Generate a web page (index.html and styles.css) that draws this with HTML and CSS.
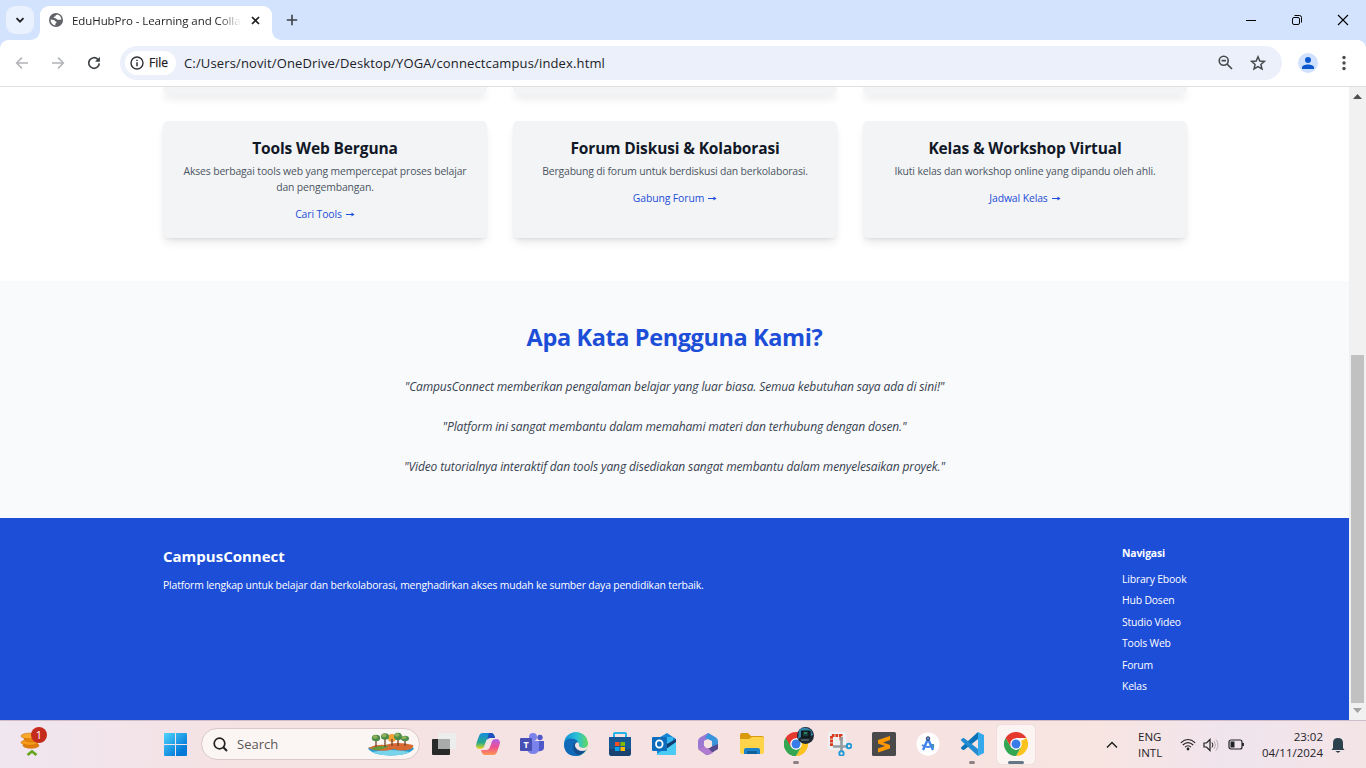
FILE: index.html
```html
<!DOCTYPE html>
<html lang="id">
<head>
<meta charset="utf-8">
<title>EduHubPro - Learning and Collaboration</title>
<link rel="stylesheet" href="styles.css">
</head>
<body>
<div class="screen">
  <header class="tabstrip">
    <div class="tabsearch"><svg width="10" height="10" viewBox="0 0 10 10"><path d="M1.5 3.2 5 6.7 8.500 3.200" fill="none" stroke="#1f2023" stroke-width="1.8"/></svg></div>
    <div class="tab">
      <svg class="globe" width="14" height="14" viewBox="0 0 14 14"><circle cx="7" cy="7" r="7" fill="#5f6368"/><path d="M8.500 1.600Q6 2.200 6.300 3.600 4.500 3.600 4.700 5 7.800 4.800 8 6.500 9.500 7 12.400 6.500 12 2.600 8.500 1.600ZM1.500 6.400Q5.800 6.600 6.200 8.200 7.800 8.300 7.500 9.700 6 9.900 6.200 12.400 1.800 11.500 1.500 6.400Z" fill="#fff"/></svg>
      <span class="tab-title">EduHubPro - Learning and Colla</span>
      <svg class="tab-x" width="9" height="9" viewBox="0 0 9 9"><path d="M1 1 8 8M8 1 1 8" stroke="#1f2023" stroke-width="1.7"/></svg>
    </div>
    <svg class="plus" width="12" height="12" viewBox="0 0 12 12"><path d="M6 .8V11.200M.8 6H11.200" stroke="#3c4043" stroke-width="1.6"/></svg>
    <div class="wincontrols">
      <svg width="12" height="12" viewBox="0 0 12 12"><path d="M1 6.500H11" stroke="#000"/></svg>
      <svg width="12" height="12" viewBox="0 0 12 12"><rect x="1.500" y="3.500" width="7" height="7" rx="1.500" fill="none" stroke="#000"/><path d="M3.500 1.500H8.500Q10.500 1.500 10.500 3.500V8.500" fill="none" stroke="#000"/></svg>
      <svg width="12" height="12" viewBox="0 0 12 12"><path d="M1 1 11 11M11 1 1 11" stroke="#000" stroke-width="1.1"/></svg>
    </div>
  </header>
  <div class="toolbar">
    <svg width="14" height="14" viewBox="0 0 14 14"><path d="M13 7H2M7 1.600 1.600 7 7 12.400" fill="none" stroke="#b2b4b8" stroke-width="1.500"/></svg>
    <svg width="14" height="14" viewBox="0 0 14 14"><path d="M1 7H12M7 1.600 12.400 7 7 12.400" fill="none" stroke="#b2b4b8" stroke-width="1.500"/></svg>
    <svg width="14" height="14" viewBox="0 0 14 14"><path d="M12.300 7.400A5.300 5.300 0 1 1 10.800 3.300L12 4.500" fill="none" stroke="#3c4043" stroke-width="1.700"/><path d="M12.900.8V5.700H8Z" fill="#3c4043"/></svg>
    <div class="omnibox">
      <div class="chip"><svg width="14" height="14" viewBox="0 0 14 14"><circle cx="7" cy="7" r="6" fill="none" stroke="#303236" stroke-width="1.400"/><path d="M7 6.200V10.200M7 3.700V5.100" stroke="#303236" stroke-width="1.500"/></svg><span>File</span></div>
      <span class="url">C:/Users/novit/OneDrive/Desktop/YOGA/connectcampus/index.html</span>
      <svg class="mag" width="15" height="15" viewBox="0 0 15 15"><circle cx="5.700" cy="5.700" r="4.500" fill="none" stroke="#474a4d" stroke-width="1.600"/><path d="M9 9 14 14M3.500 5.700H8" stroke="#474a4d" stroke-width="1.700"/></svg>
      <svg class="star" width="16" height="16" viewBox="0 0 16 16"><path d="M8 1.800 9.800 6 14.400 6.400 10.900 9.400 12 13.900 8 11.500 4 13.900 5.100 9.400 1.600 6.400 6.200 6Z" fill="none" stroke="#474a4d" stroke-width="1.500"/></svg>
    </div>
    <svg class="profile" width="20" height="20" viewBox="0 0 20 20"><circle cx="10" cy="10" r="10" fill="#d0e1fd"/><circle cx="10" cy="7" r="3" fill="#0b57d0"/><path d="M4 16V14.500C4 10.500 16 10.500 16 14.500V16Z" fill="#0b57d0"/></svg>
    <svg class="dots" width="4" height="16" viewBox="0 0 4 16"><g fill="#474a4d"><circle cx="2" cy="2.500" r="1.700"/><circle cx="2" cy="8" r="1.700"/><circle cx="2" cy="13.500" r="1.700"/></g></svg>
  </div>
  <div class="viewport">
    <main class="page">
      <section class="features">
        <div class="row tail"><div class="card"></div><div class="card"></div><div class="card"></div></div>
        <div class="row">
          <article class="card"><h3>Tools Web Berguna</h3><p>Akses berbagai tools web yang mempercepat proses belajar<br>dan pengembangan.</p><a>Cari Tools <svg class="arr" width="9" height="6" viewBox="0 0 9 6"><path d="M0 3.500H7" stroke="#1d4ed8"/><path d="M5.500 1.500 8.500 3.500 5.500 5.500Z" fill="#1d4ed8"/></svg></a></article>
          <article class="card"><h3>Forum Diskusi &amp; Kolaborasi</h3><p class="tight">Bergabung di forum untuk berdiskusi dan berkolaborasi.</p><a>Gabung Forum <svg class="arr" width="9" height="6" viewBox="0 0 9 6"><path d="M0 3.500H7" stroke="#1d4ed8"/><path d="M5.500 1.500 8.500 3.500 5.500 5.500Z" fill="#1d4ed8"/></svg></a></article>
          <article class="card"><h3>Kelas &amp; Workshop Virtual</h3><p>Ikuti kelas dan workshop online yang dipandu oleh ahli.</p><a>Jadwal Kelas <svg class="arr" width="9" height="6" viewBox="0 0 9 6"><path d="M0 3.500H7" stroke="#1d4ed8"/><path d="M5.500 1.500 8.500 3.500 5.500 5.500Z" fill="#1d4ed8"/></svg></a></article>
        </div>
      </section>
      <section class="quotes">
        <h2>Apa Kata Pengguna Kami?</h2>
        <p>"CampusConnect memberikan pengalaman belajar yang luar biasa. Semua kebutuhan saya ada di sini!"</p>
        <p>"Platform ini sangat membantu dalam memahami materi dan terhubung dengan dosen."</p>
        <p>"Video tutorialnya interaktif dan tools yang disediakan sangat membantu dalam menyelesaikan proyek."</p>
      </section>
      <footer class="foot">
        <div><h4>CampusConnect</h4><p>Platform lengkap untuk belajar dan berkolaborasi, menghadirkan akses mudah ke sumber daya pendidikan terbaik.</p></div>
        <nav><h5>Navigasi</h5><a>Library Ebook</a><a>Hub Dosen</a><a>Studio Video</a><a>Tools Web</a><a>Forum</a><a>Kelas</a></nav>
      </footer>
    </main>
    <div class="scroll">
      <svg width="9" height="5" viewBox="0 0 9 5"><path d="M0 5 4.500 0 9 5Z" fill="#505050"/></svg>
      <div class="thumb"></div>
      <svg width="9" height="5" viewBox="0 0 9 5"><path d="M0 0H9L4.500 5Z" fill="#a3a3a3"/></svg>
    </div>
  </div>
  <div class="taskbar">
    <div class="widget"><svg width="28" height="30" viewBox="0 0 28 30"><g stroke="#c76a05" stroke-width=".6"><ellipse cx="11" cy="18.500" rx="8" ry="2.800" fill="#e37d0a"/><ellipse cx="9.500" cy="15.500" rx="8.500" ry="2.800" fill="#f59a1b"/><ellipse cx="12" cy="12" rx="8" ry="2.800" fill="#e8860d"/><ellipse cx="9.500" cy="9" rx="8.500" ry="2.800" fill="#fba92d"/></g><path d="M7.500 28 12 24.500 16.500 28" fill="none" stroke="#63a51c" stroke-width="2.600"/></svg><span class="badge">1</span></div>
    <svg class="start" width="23" height="23" viewBox="0 0 23 23"><defs><linearGradient id="wg" x1="0" y1="0" x2="23" y2="23" gradientUnits="userSpaceOnUse"><stop offset="0" stop-color="#50d4fc"/><stop offset=".8" stop-color="#0078d8"/></linearGradient></defs><path d="M0 1Q0 0 1 0H11V11H0ZM12 0H22Q23 0 23 1V11H12ZM0 12H11V23H1Q0 23 0 22ZM12 12H23V22Q23 23 22 23H12Z" fill="url(#wg)"/></svg>
    <div class="search">
      <svg width="15" height="15" viewBox="0 0 15 15"><circle cx="6.500" cy="6.500" r="5.300" fill="none" stroke="#222" stroke-width="1.700"/><path d="M10.300 10.300 14 14" stroke="#222" stroke-width="2"/></svg>
      <span>Search</span>
      <svg class="island" width="48" height="24" viewBox="0 0 48 24"><path d="M1 16Q24 9 47 16 44 23 24 23.500 4 23 1 16Z" fill="#299bd0"/><path d="M5 20Q24 16 43 20 36 23.500 24 23.500 12 23.500 5 20Z" fill="#78d4eb"/><path d="M1 16Q9 12 18 13 30 9 46 13 47 15 44 17 34 20 27 17 19 20 7 18Z" fill="#d66a32"/><path d="M4 16Q14 13 22 14 17 18 7 18Z" fill="#659b3b"/><circle cx="25" cy="6" r="4" fill="#f3a134"/><path d="M9 15V6M18 15V5M31 14V5M38 14V7M25 14V7" stroke="#70412a" stroke-width="1.300"/><g fill="#4c8d48"><ellipse cx="9" cy="6" rx="4.200" ry="3.200"/><ellipse cx="18" cy="4.500" rx="4" ry="3.300"/><ellipse cx="31" cy="4.500" rx="4" ry="3.800"/><ellipse cx="38" cy="6.500" rx="4" ry="2.800"/></g><g fill="#90b25d"><ellipse cx="8" cy="5" rx="2.500" ry="1.700"/><ellipse cx="17" cy="3.500" rx="2.500" ry="1.700"/><ellipse cx="30" cy="3" rx="2.500" ry="1.700"/><ellipse cx="37" cy="5.500" rx="2.500" ry="1.500"/></g></svg>
    </div>
    <div class="apps">
      <div class="app"><svg viewBox="0 0 24 24"><rect x="0" y="7" width="18" height="16" rx="1" fill="#282a2a"/><rect x="6" y="1" width="18" height="16" rx="1" fill="#eceeee"/><path d="M6 7H18V17H6Z" fill="#a9abab"/></svg></div>
      <div class="app"><svg viewBox="0 0 24 24"><defs><linearGradient id="ca" x2="0" y2="1"><stop stop-color="#168be0"/><stop offset=".6" stop-color="#27a98b"/><stop offset="1" stop-color="#f1d617"/></linearGradient><linearGradient id="cb" x2="0" y2="1"><stop stop-color="#ae60e8"/><stop offset=".5" stop-color="#ee4f91"/><stop offset="1" stop-color="#ff9752"/></linearGradient></defs><path d="M7 1H15Q18 1 19 6H14Q11 6 10 9L8 15Q7 17 4 17 0 17 0 13 1 9 3 4 4 1 7 1Z" fill="url(#ca)"/><path d="M13 1H15Q18 1 19 6H14Q12 6 11 8Z" fill="#2050bf"/><path d="M17 23H9Q6 23 5 18H10Q13 18 14 15L16 9Q17 7 20 7 24 7 24 11 23 15 21 20 20 23 17 23Z" fill="url(#cb)"/></svg></div>
      <div class="app"><svg viewBox="0 0 24 24"><circle cx="13" cy="5" r="4" fill="#7b83eb"/><circle cx="20" cy="5.500" r="2.700" fill="#5059c9"/><path d="M17 9H24V16Q23 20 17 19Z" fill="#5059c9"/><path d="M7 9H19V16Q19 22 13 22 8 22 7 17Z" fill="#7b83eb"/><rect y="6" width="12" height="13" rx="1" fill="#474eb4"/><text x="6" y="16" text-anchor="middle" class="logo-t">T</text></svg></div>
      <div class="app"><svg viewBox="0 0 24 24"><defs><linearGradient id="ed" x2="1" y2="0"><stop stop-color="#138ed5"/><stop offset=".55" stop-color="#2bc1d5"/><stop offset="1" stop-color="#62d85c"/></linearGradient></defs><circle cx="12" cy="12" r="12" fill="url(#ed)"/><path d="M0 13Q1 5 10 7 14 8 14 11 9 11 10 15 12 20 22 18 18 24 12 24 1 24 0 13Z" fill="#1269b8"/><path d="M10 11Q7 19 14 23 19 22 22 18 15 20 12 16 10 13 12 11Z" fill="#154d8d"/><path d="M12 11Q14 9 15 12 14 15 19 16 23 16 24 12 24 16 21.500 18.500 15 20 12 16 10 13 12 11Z" fill="#f5e2e1"/></svg></div>
      <div class="app"><svg viewBox="0 0 24 24"><path d="M6 6V2Q6 1 7 1H17Q18 1 18 2V6" fill="none" stroke="#24b4e8" stroke-width="2"/><path d="M1 5H23V21Q23 24 20 24H4Q1 24 1 21Z" fill="#165893"/><path d="M1 17H23V21Q23 24 20 24H4Q1 24 1 21Z" fill="#194271"/><path d="M7 10H11.500V14H7Z" fill="#f25022"/><path d="M12.500 10H17V14H12.500Z" fill="#7fba00"/><path d="M7 15H11.500V19H7Z" fill="#00a4ef"/><path d="M12.500 15H17V19H12.500Z" fill="#ffb900"/></svg></div>
      <div class="app"><svg viewBox="0 0 24 24"><path d="M5 7 15 1 24 7V21Q24 23 22 23H7Q5 23 5 21Z" fill="#1686d4"/><path d="M9 5H21V15H9Z" fill="#35b8f1"/><path d="M24 9 5 22Q6 23 7 23H22Q24 23 24 21Z" fill="#49cbf4"/><path d="M15 12 24 7V10L14 17Z" fill="#123b70"/><rect y="5" width="15" height="14" rx="1" fill="#0f6cbd"/><ellipse cx="7.300" cy="12" rx="3.300" ry="3.700" fill="none" stroke="#fff" stroke-width="1.800"/></svg></div>
      <div class="app"><svg viewBox="0 0 24 24"><path d="M12 1 4 5.500Q2 7 2 9V16L8 19V9L17 4Z" fill="#9b79d3"/><path d="M12 1 20 5.500Q22 7 22 9V17L16 14V9L9 6Z" fill="#3a94dc"/><path d="M22 12V17L13 22.500Q11 23.500 9 22L2 17 8 14 12 16Z" fill="#57498e"/><path d="M2 17 8 14 13 17 17 21 13 22.500Q11 23.500 9 22Z" fill="#b07bd0"/><circle cx="12" cy="12" r="4.200" fill="#f5e2e1"/></svg></div>
      <div class="app"><svg viewBox="0 0 24 24"><path d="M0 3Q0 1 2 1H8L11 4H22Q24 4 24 6V10H0Z" fill="#d99a10"/><path d="M0 7H9L12 5H22Q24 5 24 7V20Q24 22 22 22H2Q0 22 0 20Z" fill="#ffd34a"/><path d="M4 22V18Q4 16 6 16H18Q20 16 20 18V22Z" fill="#1e82cb"/><path d="M7 19H17V22H7Z" fill="#13609e"/></svg></div>
      <div class="app"><svg viewBox="0 0 24 24"><path d="M12 12 12 24A12 12 0 0 1 1.600 6Z" fill="#32a650"/><path d="M12 12 22.400 6A12 12 0 0 1 12 24L17 15Z" fill="#fcc31e"/><path d="M12 12 6.800 15 1.600 6A12 12 0 0 1 22.400 6H12Z" fill="#e5392f"/><path d="M1.600 6 6.800 15 12 18 17 15 12 24A12 12 0 0 1 1.600 6Z" fill="#32a650"/><circle cx="12" cy="12" r="5.800" fill="#fff"/><circle cx="12" cy="12" r="4.500" fill="#397be7"/></svg><svg class="avatar" viewBox="0 0 17 17"><circle cx="8.500" cy="8.500" r="8.500" fill="#1d2931"/><path d="M2 3Q7-2 14 3L16 8 14 9V4H4V10L1 12Z" fill="#3383a8"/><rect x="5" y="4" width="7" height="6" fill="#183b3b" stroke="#080a0d"/><path d="M7 6H10" stroke="#3bcc8a"/><path d="M4 13H12" stroke="#798790"/></svg><i class="run"></i></div>
      <div class="app"><svg viewBox="0 0 24 24"><rect y="0" width="18" height="18" rx="2" fill="#eef0f1"/><path d="M3.500 14V3.500H13V9" fill="none" stroke="#d83b20" stroke-width="3" stroke-dasharray="2.800 .8"/><path d="M13.500 5V19M5 14.500H20" stroke="#949ba1" stroke-width="2.600"/><circle cx="21" cy="14" r="2.300" fill="none" stroke="#219bd8" stroke-width="1.900"/><circle cx="13.500" cy="21.500" r="2.200" fill="none" stroke="#219bd8" stroke-width="1.900"/></svg></div>
      <div class="app"><svg viewBox="0 0 24 24"><rect width="24" height="24" rx="1.500" fill="#4a4a4a"/><path d="M18 4V8L11 10.500 18 13V16.500L6 20.500V16.500L13 14 6 11.500V8Z" fill="#ff9800"/></svg></div>
      <div class="app"><svg viewBox="0 0 24 24"><circle cx="12" cy="12" r="11.500" fill="#fff"/><path d="M14 12H18V16H16Z" fill="#35a854"/><path d="M11.500 8 7 18M12.500 8 17 18" stroke="#3f83ef" stroke-width="2.400"/><path d="M6 13Q12 17 18 13" fill="none" stroke="#4987e6" stroke-width="2"/><circle cx="12" cy="6.500" r="1.700" fill="#6c9ee9" stroke="#263449"/></svg></div>
      <div class="app"><svg viewBox="0 0 24 24"><path d="M18 0 24 3V21L18 24 1 9 3 7Z" fill="none"/><path d="M18 7V0L1 15.500V16.500L3 18H4Z" fill="#0872b8"/><path d="M18 17V24L1 8.500V7.500L3 6H4Z" fill="#238bd1"/><path d="M18 0 24 3V21L18 24Z" fill="#36a9ed"/></svg><i class="run"></i></div>
      <div class="app active"><svg viewBox="0 0 24 24"><path d="M12 12 22.400 6A12 12 0 0 1 12 24L17 15Z" fill="#fcc31e"/><path d="M12 12 6.800 15 1.600 6A12 12 0 0 1 22.400 6H12Z" fill="#e5392f"/><path d="M1.600 6 6.800 15 12 18 17 15 12 24A12 12 0 0 1 1.600 6Z" fill="#32a650"/><circle cx="12" cy="12" r="5.800" fill="#fff"/><circle cx="12" cy="12" r="4.500" fill="#397be7"/></svg><i class="run wide"></i></div>
    </div>
    <div class="tray">
      <svg class="chev" width="12" height="8" viewBox="0 0 12 8"><path d="M1 6.500 6 1.500 11 6.500" fill="none" stroke="#222" stroke-width="1.500"/></svg>
      <div class="lang">ENG<br>INTL</div>
      <svg class="wifi" width="16" height="13" viewBox="0 0 16 13"><path d="M.8 4.800Q8-1.800 15.200 4.800M2.800 7Q8 2.200 13.200 7M5 9.200Q8 6.200 11 9.200" fill="none" stroke="#222" stroke-width="1.150"/><circle cx="8" cy="11" r="1.400" fill="#222"/></svg>
      <svg class="vol" width="17" height="14" viewBox="0 0 17 14"><path d="M1 5H3.500L7 1.500V12.500L3.500 9H1Z" fill="none" stroke="#222" stroke-width="1.200"/><path d="M9 4.500Q10.800 7 9 9.500" fill="none" stroke="#222"/><path d="M11 3Q14 7 11 11M13 1.500Q17 7 13 12.500" fill="none" stroke="#b7acb0"/></svg>
      <svg class="bat" width="17" height="11" viewBox="0 0 17 11"><rect x="1" y="1" width="13" height="9" rx="2" fill="none" stroke="#222" stroke-width="1.200"/><rect x="2.500" y="2.500" width="4" height="6" fill="#222"/><path d="M15 4V7" stroke="#222" stroke-width="1.800"/></svg>
      <div class="clock">23:02<br>04/11/2024</div>
      <svg class="bell" width="14" height="16" viewBox="0 0 14 16"><path d="M2 11V6Q2 1 7 1T12 6V11L13.500 13H.5ZM4.500 14H9.500Q8 15.800 7 15.800T4.500 14Z" fill="#2c414e"/></svg>
    </div>
  </div>
</div>
</body>
</html>
```
FILE: styles.css
```css
* { box-sizing: border-box; }
body { margin: 0; overflow: hidden; font-family: "Open Sans", "Noto Sans", sans-serif; }
svg { display: block; flex: none; }
h2, h3, h4, h5, p { margin: 0; white-space: nowrap; }
.screen { width: 1366px; height: 768px; display: flex; flex-direction: column; background: #fff; }

.tabstrip { height: 40px; background: #d3e3fd; display: flex; flex: none; }
.tabsearch { width: 28px; height: 28px; margin: 6px 0 0 6px; border-radius: 9px; background: #e9f0fe; display: flex; align-items: center; justify-content: center; }
.tab { width: 232px; height: 34px; margin: 6px 0 0 6px; border-radius: 9px 9px 0 0; background: #fff; display: flex; align-items: center; padding: 0 0 6px 9px; position: relative; }
.tab::before, .tab::after { content: ""; position: absolute; bottom: 0; width: 9px; height: 9px; }
.tab::before { left: -9px; background: radial-gradient(circle at 0 0, transparent 8.5px, #fff 9px); }
.tab::after { right: -9px; background: radial-gradient(circle at 100% 0, transparent 8.5px, #fff 9px); }
.tab-title { width: 169px; margin-left: 9px; overflow: hidden; white-space: nowrap; font-size: 11.5px; letter-spacing: -.08px; color: #1f2023; -webkit-mask-image: linear-gradient(90deg, #000 87%, transparent 100%); }
.tab-x { margin-left: 10px; }
.plus { margin: 14px 0 0 14px; }
.wincontrols { margin: 14px 17px 0 auto; display: flex; gap: 34px; }

.toolbar { height: 47px; flex: none; display: flex; align-items: center; padding: 0 0 1px 15px; border-bottom: 1px solid #dde1e0; gap: 22px; position: relative; background: #fff; }
.toolbar::before, .toolbar::after { content: ""; position: absolute; top: 0; width: 8px; height: 8px; }
.toolbar::before { left: 0; background: radial-gradient(circle at 100% 100%, transparent 7.500px, #d3e3fd 8px); }
.toolbar::after { right: 0; background: radial-gradient(circle at 0 100%, transparent 7.500px, #d3e3fd 8px); }
.omnibox { width: 1162px; height: 34px; margin-left: -3px; border-radius: 17px; background: #ecf0fa; display: flex; align-items: center; padding: 0 16px 0 5px; }
.chip { width: 51px; height: 24px; border-radius: 12px; background: #fff; display: flex; align-items: center; padding-left: 5px; gap: 5px; font-size: 12px; color: #1f2023; -webkit-text-stroke: .25px #1f2023; }
.url { margin-left: 8px; font-size: 13px; letter-spacing: .14px; color: #202226; white-space: nowrap; }
.mag { margin-left: auto; }
.star { margin-left: 17px; }
.profile { margin-left: -6px; }
.dots { margin-left: 2px; }

.viewport { height: 633px; flex: none; display: flex; overflow: hidden; }
.page { width: 1349px; }
.features { height: 194px; padding: 0 162px 0 163px; }
.row { display: grid; grid-template-columns: repeat(3, 324px); column-gap: 26px; margin-top: 27px; height: 117px; }
.row.tail { height: 7px; margin-top: 0; }
.card { border-radius: 5px; background: #f3f4f6; box-shadow: 0 6px 10px -2px rgba(0,0,0,.1), 0 2px 4px -2px rgba(0,0,0,.1); padding-top: 16px; text-align: center; }
.tail .card { padding: 0; border-radius: 0 0 5px 5px; box-shadow: 0 5px 8px -1px rgba(0,0,0,.12); }
.card h3 { font-size: 15.500px; line-height: 23px; font-weight: 700; letter-spacing: -.13px; color: #111827; }
.card p { margin-top: 3px; font-size: 10.400px; line-height: 16px; letter-spacing: -.13px; color: #4b5563; }
.card p.tight { letter-spacing: -.16px; }
.card a { display: flex; justify-content: center; align-items: center; gap: 4px; margin-top: 11px; font-size: 10.400px; line-height: 16px; color: #1d4ed8; letter-spacing: -.1px; }
.quotes { height: 237px; background: #f9fafb; padding-top: 38px; text-align: center; }
.quotes h2 { font-size: 23.500px; line-height: 36px; letter-spacing: -.39px; color: #1d4ed8; margin-bottom: 22px; }
.quotes p { font-size: 12px; line-height: 20px; margin-bottom: 20px; font-style: italic; letter-spacing: -.13px; color: #374151; }
.foot { height: 202px; background: #1d4ed8; color: #fff; padding: 27px 162px 0 163px; display: flex; justify-content: space-between; font-size: 10.400px; letter-spacing: -.17px; }
.foot h4 { font-size: 15px; line-height: 22px; letter-spacing: 0; }
.foot p { margin-top: 10px; line-height: 16px; }
.foot nav { width: 65px; display: flex; flex-direction: column; white-space: nowrap; }
.foot h5 { font-size: 10.400px; line-height: 16px; margin-bottom: 8px; }
.foot nav a { line-height: 21.400px; }
.scroll { width: 17px; background: #f1f1f1; display: flex; flex-direction: column; align-items: center; padding: 7px 0; }
.thumb { width: 13px; height: 348px; margin: 256px 0 5px; background: #c1c1c1; }

.taskbar { height: 48px; flex: none; border-top: 1px solid #cfbcc8; background: linear-gradient(90deg, #f0e6f0 0, #f5e2e3 18%, #f5e2e1 60%, #f8e5e1 80%, #f0e4ed 90%, #f3e4e6 100%); display: flex; position: relative; }
.widget { width: 28px; margin: 6px 0 0 20px; position: relative; }
.badge { position: absolute; left: 11px; top: 0; width: 16px; height: 16px; border-radius: 8px; background: #c42b1c; color: #fff; font-size: 11px; line-height: 16px; text-align: center; }
.start { margin: 12px 0 0 116px; }
.search { width: 219px; height: 32px; margin: 7px 0 0 14px; border-radius: 16px; background: #fbf5f4; border: 1px solid #dcc8c9; display: flex; align-items: center; padding: 0 4px 0 11px; font-size: 13px; color: #5c5757; }
.search span { margin-left: 9px; }
.island { margin-left: auto; }
.apps { display: flex; margin: 4px 0 0 5px; gap: 6px; }
.app { width: 38px; height: 39px; display: flex; justify-content: center; padding-top: 7px; position: relative; border-radius: 4px; }
.app > svg { width: 24px; height: 24px; }
.app > svg.avatar { position: absolute; width: 17px; height: 17px; left: 20px; top: 2px; }
.active { background: #fcf3f3; box-shadow: 0 0 1px #bba; }
.run { position: absolute; bottom: 0; left: 16px; width: 6px; height: 3px; border-radius: 2px; background: #8b8186; }
.run.wide { left: 11px; width: 16px; background: #647785; }
.logo-t { font: bold 9px "Open Sans", sans-serif; fill: #fff; }
.tray { margin-left: auto; display: flex; align-items: center; padding-right: 21px; font-size: 11.500px; line-height: 16px; color: #262329; }
.lang { margin-left: 20px; text-align: left; width: 25px; }
.wifi { margin-left: 17px; }
.vol { margin-left: 7px; }
.bat { margin-left: 8px; }
.clock { width: 64px; margin-left: 14px; text-align: right; }
.bell { margin-left: 8px; }
```
